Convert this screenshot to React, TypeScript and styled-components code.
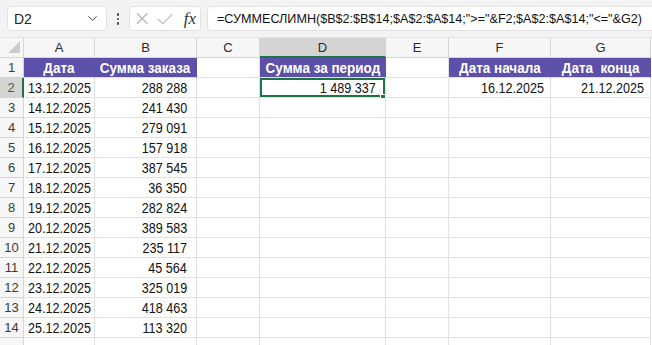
import styled, { createGlobalStyle } from 'styled-components';
import { ChevronDown } from 'lucide-react';

const PURPLE = '#5c50a8';
const GREEN = '#1f7244';

const rows: [string, string][] = [
  ['13.12.2025', '288 288'],
  ['14.12.2025', '241 430'],
  ['15.12.2025', '279 091'],
  ['16.12.2025', '157 918'],
  ['17.12.2025', '387 545'],
  ['18.12.2025', '36 350'],
  ['19.12.2025', '282 824'],
  ['20.12.2025', '389 583'],
  ['21.12.2025', '235 117'],
  ['22.12.2025', '45 564'],
  ['23.12.2025', '325 019'],
  ['24.12.2025', '418 463'],
  ['25.12.2025', '113 320'],
];

const columns = ['A', 'B', 'C', 'D', 'E', 'F', 'G'];

type Align = 'left' | 'center' | 'right';

const App = () => {
  return (
    <>
      <GlobalStyle />
      <Page>
        <TopBar>
          <NameBox>
            <span>D2</span>
            <ChevronDown size={15} strokeWidth={1.6} color='#444' />
          </NameBox>
          <Kebab>
            <i /><i /><i />
          </Kebab>
          <FxBox>
            <svg width='13' height='13' viewBox='0 0 13 13'>
              <path d='M1 1 L12 12 M12 1 L1 12' stroke='#b4b4b4' strokeWidth='1.2' fill='none' />
            </svg>
            <svg width='17' height='12' viewBox='0 0 17 12'>
              <path d='M1 6 L6 11 L16 1' stroke='#b4b4b4' strokeWidth='1.2' fill='none' />
            </svg>
            <Fx>fx</Fx>
          </FxBox>
          <FormulaBox>=СУММЕСЛИМН($B$2:$B$14;$A$2:$A$14;"&gt;="&amp;F2;$A$2:$A$14;"&lt;="&amp;G2)</FormulaBox>
        </TopBar>

        <Sheet>
          <Corner><Triangle /></Corner>
          {columns.map(col => (
            <ColHead key={col} $active={col === 'D'}>{col}</ColHead>
          ))}

          <RowHead>1</RowHead>
          <Cell $fill $align='center'><Text $align='center' $bold>Дата</Text></Cell>
          <Cell $fill $align='center'><Text $align='center' $bold>Сумма заказа</Text></Cell>
          <Cell />
          <Cell $fill $align='center'><Text $align='center' $bold>Сумма за период</Text></Cell>
          <Cell />
          <Cell $fill $align='center'><Text $align='center' $bold>Дата начала</Text></Cell>
          <Cell $fill $align='center'><Text $align='center' $bold>Дата  конца</Text></Cell>

          {rows.map(([date, sum], i) => (
            <Row key={date}>
              <RowHead $active={i === 0}>{i + 2}</RowHead>
              <Cell><Text>{date}</Text></Cell>
              <Cell $align='right'><Text $align='right'>{sum}</Text></Cell>
              <Cell />
              {i === 0 ? (
                <Cell $align='right' $selected>
                  <Text $align='right'>1 489 337</Text>
                  <Handle />
                </Cell>
              ) : <Cell />}
              <Cell />
              <Cell $align='right' $tight>{i === 0 && <Text $align='right'>16.12.2025</Text>}</Cell>
              <Cell $align='right' $tight>{i === 0 && <Text $align='right'>21.12.2025</Text>}</Cell>
            </Row>
          ))}

          <RowHead />
          {columns.map(col => <Cell key={col} />)}
        </Sheet>
      </Page>
    </>
  );
};

const GlobalStyle = createGlobalStyle`
* {
    box-sizing: border-box;
}

body {
    margin: 0;
    background: #ffffff;
    overflow: hidden;
}
`;

const Page = styled.div`
width: 652px;
height: 345px;
overflow: hidden;
font-family: "Liberation Sans", Arial, sans-serif;
`;

const TopBar = styled.div`
display: flex;
align-items: flex-start;
height: 38px;
padding: 6px 0 0 7px;
background: #f3f3f3;
border-bottom: 1px solid #e3e3e3;
`;

const NameBox = styled.div`
display: flex;
align-items: center;
justify-content: space-between;
width: 100px;
height: 25px;
padding: 0 6px 0 6px;
background: #ffffff;
border: 1px solid #e2e2e2;
border-radius: 4px;
font-size: 14px;
color: #222;
`;

const Kebab = styled.div`
display: flex;
flex-direction: column;
align-items: center;
gap: 2px;
width: 22px;
padding-top: 7px;

i {
    display: block;
    width: 2.5px;
    height: 2.5px;
    border-radius: 50%;
    background: #444;
}
`;

const FxBox = styled.div`
display: flex;
align-items: center;
gap: 9px;
width: 72px;
height: 25px;
padding: 0 4px 0 6px;
background: #ffffff;
border: 1px solid #e2e2e2;
border-radius: 4px;
`;

const Fx = styled.span`
font-family: "Liberation Serif", "Times New Roman", serif;
font-style: italic;
font-size: 17px;
color: #333;
margin-left: 1px;
`;

const FormulaBox = styled.div`
flex: 1;
display: flex;
align-items: center;
height: 25px;
margin-left: 6px;
margin-right: -8px;
padding-left: 9px;
background: #ffffff;
border: 1px solid #e2e2e2;
border-radius: 4px;
font-size: 12.6px;
color: #111;
white-space: nowrap;
overflow: hidden;
`;

const Sheet = styled.div`
display: grid;
grid-template-columns: 24px 71px 102px 63px 126px 63px 102px 100px;
grid-auto-rows: 20px;
`;

const Row = styled.div`
display: contents;
`;

const Corner = styled.div`
position: relative;
background: #f6f6f6;
border-right: 1px solid #d4d4d4;
border-bottom: 1px solid #d4d4d4;
`;

const Triangle = styled.div`
position: absolute;
right: 3px;
bottom: 4px;
width: 0;
height: 0;
border-left: 12px solid transparent;
border-bottom: 12px solid #cbcbcb;
`;

const ColHead = styled.div<{ $active?: boolean }>`
display: flex;
align-items: center;
justify-content: center;
background: ${({ $active }) => $active ? '#d4d4d4' : '#f6f6f6'};
border-right: 1px solid #d4d4d4;
border-bottom: ${({ $active }) => $active ? `2px solid ${GREEN}` : '1px solid #d4d4d4'};
font-size: 13px;
color: #2a2a2a;
`;

const RowHead = styled.div<{ $active?: boolean }>`
display: flex;
align-items: center;
justify-content: center;
background: ${({ $active }) => $active ? '#d4d4d4' : '#f6f6f6'};
border-right: ${({ $active }) => $active ? `2px solid ${GREEN}` : '1px solid #d4d4d4'};
border-bottom: 1px solid #d4d4d4;
font-size: 13px;
color: ${({ $active }) => $active ? GREEN : '#3a3a3a'};
`;

const Cell = styled.div<{
    $fill?: boolean;
    $align?: Align;
    $selected?: boolean;
    $tight?: boolean;
}>`
position: relative;
display: flex;
align-items: center;
justify-content: ${({ $align = 'left' }) => ({ left: 'flex-start', center: 'center', right: 'flex-end' })[$align]};
padding: ${({ $align, $tight }) => $align === 'right' ? `0 ${$tight ? 6 : 9}px 0 4px` : '0 4px'};
background: ${({ $fill }) => $fill ? PURPLE : '#ffffff'};
border-right: 1px solid ${({ $fill }) => $fill ? PURPLE : '#e1e1e1'};
border-bottom: 1px solid #e1e1e1;
box-shadow: ${({ $selected }) => $selected ? `inset 0 0 0 2px ${GREEN}` : 'none'};
color: ${({ $fill }) => $fill ? '#ffffff' : '#111111'};
`;

// narrow cell font: Liberation Sans squeezed to the width of a narrow face
const Text = styled.span<{ $align?: Align; $bold?: boolean }>`
display: inline-block;
font-family: "Liberation Sans", Arial, sans-serif;
font-size: ${({ $bold }) => $bold ? 15.5 : 15}px;
font-weight: ${({ $bold }) => $bold ? 700 : 400};
white-space: pre;
transform: scaleX(${({ $bold }) => $bold ? 0.87 : 0.84});
transform-origin: ${({ $align = 'left' }) => $align} center;
`;

const Handle = styled.span`
position: absolute;
right: -1px;
bottom: -3px;
width: 6px;
height: 6px;
background: ${GREEN};
border: 1px solid #ffffff;
`;

export default App;
